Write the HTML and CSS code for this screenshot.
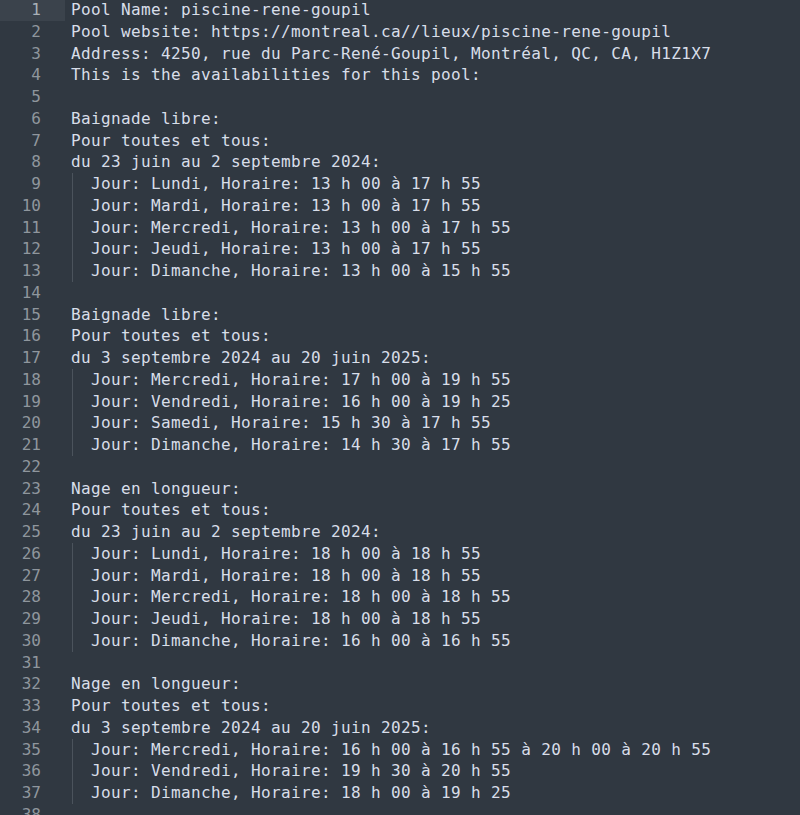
FILE: index.html
```html
<!DOCTYPE html>
<html>
<head>
<meta charset="utf-8">
<link rel="stylesheet" href="styles.css">
</head>
<body>
<div class="editor">
<div class="row current"><span class="num">1</span><span class="code">Pool Name: piscine-rene-goupil</span></div>
<div class="row"><span class="num">2</span><span class="code">Pool website: https://montreal.ca//lieux/piscine-rene-goupil</span></div>
<div class="row"><span class="num">3</span><span class="code">Address: 4250, rue du Parc-René-Goupil, Montréal, QC, CA, H1Z1X7</span></div>
<div class="row"><span class="num">4</span><span class="code">This is the availabilities for this pool:</span></div>
<div class="row"><span class="num">5</span><span class="code"></span></div>
<div class="row"><span class="num">6</span><span class="code">Baignade libre:</span></div>
<div class="row"><span class="num">7</span><span class="code">Pour toutes et tous:</span></div>
<div class="row"><span class="num">8</span><span class="code">du 23 juin au 2 septembre 2024:</span></div>
<div class="row"><span class="num">9</span><span class="code ind">  Jour: Lundi, Horaire: 13 h 00 à 17 h 55</span></div>
<div class="row"><span class="num">10</span><span class="code ind">  Jour: Mardi, Horaire: 13 h 00 à 17 h 55</span></div>
<div class="row"><span class="num">11</span><span class="code ind">  Jour: Mercredi, Horaire: 13 h 00 à 17 h 55</span></div>
<div class="row"><span class="num">12</span><span class="code ind">  Jour: Jeudi, Horaire: 13 h 00 à 17 h 55</span></div>
<div class="row"><span class="num">13</span><span class="code ind">  Jour: Dimanche, Horaire: 13 h 00 à 15 h 55</span></div>
<div class="row"><span class="num">14</span><span class="code"></span></div>
<div class="row"><span class="num">15</span><span class="code">Baignade libre:</span></div>
<div class="row"><span class="num">16</span><span class="code">Pour toutes et tous:</span></div>
<div class="row"><span class="num">17</span><span class="code">du 3 septembre 2024 au 20 juin 2025:</span></div>
<div class="row"><span class="num">18</span><span class="code ind">  Jour: Mercredi, Horaire: 17 h 00 à 19 h 55</span></div>
<div class="row"><span class="num">19</span><span class="code ind">  Jour: Vendredi, Horaire: 16 h 00 à 19 h 25</span></div>
<div class="row"><span class="num">20</span><span class="code ind">  Jour: Samedi, Horaire: 15 h 30 à 17 h 55</span></div>
<div class="row"><span class="num">21</span><span class="code ind">  Jour: Dimanche, Horaire: 14 h 30 à 17 h 55</span></div>
<div class="row"><span class="num">22</span><span class="code"></span></div>
<div class="row"><span class="num">23</span><span class="code">Nage en longueur:</span></div>
<div class="row"><span class="num">24</span><span class="code">Pour toutes et tous:</span></div>
<div class="row"><span class="num">25</span><span class="code">du 23 juin au 2 septembre 2024:</span></div>
<div class="row"><span class="num">26</span><span class="code ind">  Jour: Lundi, Horaire: 18 h 00 à 18 h 55</span></div>
<div class="row"><span class="num">27</span><span class="code ind">  Jour: Mardi, Horaire: 18 h 00 à 18 h 55</span></div>
<div class="row"><span class="num">28</span><span class="code ind">  Jour: Mercredi, Horaire: 18 h 00 à 18 h 55</span></div>
<div class="row"><span class="num">29</span><span class="code ind">  Jour: Jeudi, Horaire: 18 h 00 à 18 h 55</span></div>
<div class="row"><span class="num">30</span><span class="code ind">  Jour: Dimanche, Horaire: 16 h 00 à 16 h 55</span></div>
<div class="row"><span class="num">31</span><span class="code"></span></div>
<div class="row"><span class="num">32</span><span class="code">Nage en longueur:</span></div>
<div class="row"><span class="num">33</span><span class="code">Pour toutes et tous:</span></div>
<div class="row"><span class="num">34</span><span class="code">du 3 septembre 2024 au 20 juin 2025:</span></div>
<div class="row"><span class="num">35</span><span class="code ind">  Jour: Mercredi, Horaire: 16 h 00 à 16 h 55 à 20 h 00 à 20 h 55</span></div>
<div class="row"><span class="num">36</span><span class="code ind">  Jour: Vendredi, Horaire: 19 h 30 à 20 h 55</span></div>
<div class="row"><span class="num">37</span><span class="code ind">  Jour: Dimanche, Horaire: 18 h 00 à 19 h 25</span></div>
<div class="row"><span class="num">38</span><span class="code"></span></div>
</div>
</body>
</html>
```
FILE: styles.css
```css
html, body {
  margin: 0;
  padding: 0;
  background: #303841;
  height: 100%;
  overflow: hidden;
}
.editor {
  margin-top: -1px;
  font-family: "DejaVu Sans Mono", "Liberation Mono", monospace;
  font-size: 16px;
  letter-spacing: 0.37px;
  line-height: 21.75px;
  color: #d8dee9;
}
.row {
  display: flex;
  height: 21.75px;
}
.num {
  flex: 0 0 65px;
  box-sizing: border-box;
  padding-right: 24px;
  text-align: right;
  color: #8f969d;
  letter-spacing: 0;
}
.current .num {
  background: #3b434c;
  color: #a9b0b7;
}
.code {
  flex: 1;
  padding-left: 6px;
  white-space: pre;
}
.ind {
  background: linear-gradient(#4b535c, #4b535c) no-repeat 7px 0 / 1px 100%;
}
```
